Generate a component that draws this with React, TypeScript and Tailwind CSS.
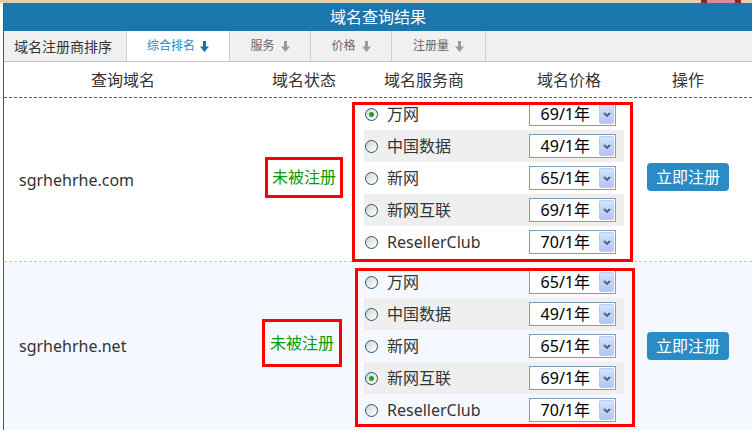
import React from 'react'

const providers = ['万网', '中国数据', '新网', '新网互联', 'ResellerClub']

const rows = [
  {
    domain: 'sgrhehrhe.com',
    selected: 0,
    prices: ['69', '49', '65', '69', '70'],
    rowCls: 'h-[164px] bg-white border-b border-dashed border-[#c8c8c8]',
    statusCls: 'ml-[16px] w-[78px] h-[41px] mb-[5px]',
    listCls: 'pt-0',
    frameCls: 'top-[4px] -bottom-[4px] -left-[12px] -right-[9px]',
    btnCls: 'mb-[6px]',
  },
  {
    domain: 'sgrhehrhe.net',
    selected: 3,
    prices: ['65', '49', '65', '69', '70'],
    rowCls: 'h-[168px] bg-[#f5f9ff]',
    statusCls: 'ml-[13px] w-[80px] h-[48px] mb-[6px]',
    listCls: 'pt-[4px]',
    frameCls: 'top-[2px] -bottom-[1px] -left-[9px] -right-[11px]',
    btnCls: 'mb-0',
  },
]

const tabs = [
  { label: '服务', w: 'w-[81px]' },
  { label: '价格', w: 'w-[81px]' },
  { label: '注册量', w: 'w-[94px]' },
]

function SortArrow({ color }: { color: string }) {
  return (
    <svg width="9" height="11" viewBox="0 0 9 11" className="shrink-0">
      <path d="M3 0h3v5.5h3L4.5 11 0 5.5h3z" fill={color} />
    </svg>
  )
}

function Radio({ checked }: { checked: boolean }) {
  return (
    <span className="w-[13px] h-[13px] shrink-0 rounded-full border border-[#1f5381] bg-gradient-to-br from-[#d9d6ce] to-white flex items-center justify-center">
      {checked && <span className="w-[5px] h-[5px] rounded-full bg-[#22a322]" />}
    </span>
  )
}

function PriceSelect({ price }: { price: string }) {
  return (
    <div className="w-[87px] h-[24px] border border-[#7f9db9] bg-white flex items-center justify-end pr-px">
      <span className="text-[16px] leading-none text-black pr-[9px]">{price}/1年</span>
      <span className="w-[15px] h-[20px] rounded-[2px] border border-[#b9cbf5] bg-gradient-to-b from-[#d6e1fd] to-[#b3c6f7] flex items-center justify-center">
        <svg width="8" height="5" viewBox="0 0 8 5">
          <path d="M1 1l3 3 3-3" fill="none" stroke="#4d5f85" strokeWidth="1.8" />
        </svg>
      </span>
    </div>
  )
}

export default function App() {
  return (
    <div className="w-[752px] h-[431px] overflow-hidden bg-white font-['Noto_Sans','Noto_Sans_CJK_SC',sans-serif] text-[#333]">
      <div className="h-[3px] bg-[#e6cfa6] flex">
        <div className="ml-auto mr-[11px] w-[40px] h-[3px] bg-[#d98c98] border-x-[6px] border-[#8b2330]" />
      </div>
      <div className="flex">
        <div className="w-[3px] bg-white" />
        <div className="flex-1 border-l border-[#26618f]">
          <div className="h-[28px] bg-[#1a77ae] text-white text-[16px] flex items-center justify-center">
            域名查询结果
          </div>

          <div className="h-[31px] bg-[#f0f0f0] border-b border-[#c4c4c4] flex">
            <div className="w-[123px] border-r border-[#cfcfcf] flex items-center pl-[10px] text-[14px] text-[#333]">
              域名注册商排序
            </div>
            <div className="w-[103px] bg-white border-r border-[#cfcfcf] flex items-center justify-center gap-[5px] text-[12px] text-[#2b86c0]">
              综合排名
              <SortArrow color="#1d6fa8" />
            </div>
            {tabs.map((t) => (
              <div
                key={t.label}
                className={`${t.w} border-r border-[#cfcfcf] flex items-center justify-center gap-[6px] text-[12px] text-[#666]`}
              >
                {t.label}
                <SortArrow color="#9a9a9a" />
              </div>
            ))}
          </div>

          <div className="h-[36px] border-b border-dashed border-[#2a6f9e] flex items-center text-[16px] text-[#333]">
            <div className="w-[238px] text-center">查询域名</div>
            <div className="w-[124px] text-center">域名状态</div>
            <div className="w-[116px] text-center">域名服务商</div>
            <div className="w-[174px] text-center">域名价格</div>
            <div className="w-[64px] text-center">操作</div>
          </div>

          {rows.map((r) => (
            <div key={r.domain} className={`${r.rowCls} flex items-center`}>
              <div className="w-[245px] pl-[15px] text-[16px] text-[#333]">{r.domain}</div>
              <div className="w-[110px] flex">
                <div className={`${r.statusCls} border-[3px] border-[#ff0000] flex items-center justify-center text-[16px] text-[#089a08]`}>
                  未被注册
                </div>
              </div>
              <div className={`w-[265px] pl-[5px] self-start ${r.listCls}`}>
                <div className="relative w-[260px]">
                  {providers.map((p, i) => (
                    <div
                      key={p}
                      className={`h-[32px] flex items-center pl-px pr-[8px] ${i % 2 === 1 ? 'bg-[#efefef]' : ''}`}
                    >
                      <Radio checked={i === r.selected} />
                      <span className="ml-[9px] flex-1 text-[16px] text-[#333]">{p}</span>
                      <PriceSelect price={r.prices[i]} />
                    </div>
                  ))}
                  <div className={`absolute ${r.frameCls} border-[3px] border-[#ff0000] pointer-events-none`} />
                </div>
              </div>
              <div className="flex-1 pl-[23px]">
                <button
                  className={`${r.btnCls} w-[82px] h-[28px] rounded-[4px] bg-[#2a8bc7] text-white text-[16px] flex items-center justify-center`}
                >
                  立即注册
                </button>
              </div>
            </div>
          ))}
        </div>
      </div>
    </div>
  )
}
